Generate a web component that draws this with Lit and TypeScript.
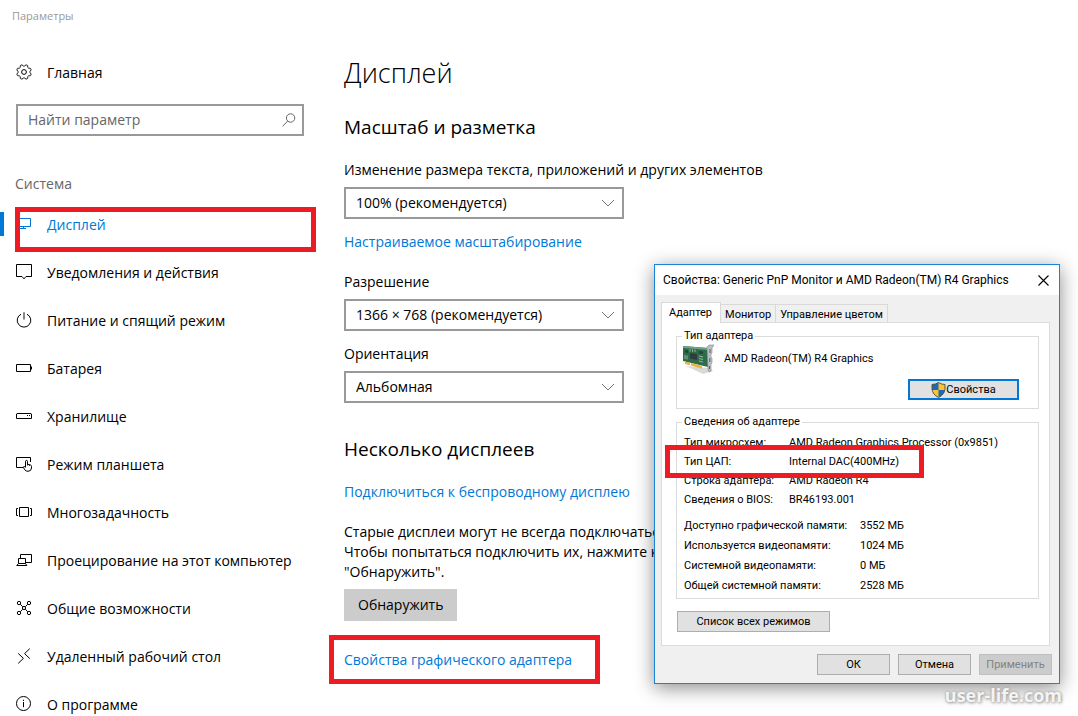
import { LitElement, html, css, svg } from "lit";
import { customElement, property, state } from "lit/decorators.js";
import { classMap } from "lit/directives/class-map.js";

const gearPath = (() => {
  // Eight rounded teeth around a circle, centred in a 16x16 box.
  const steps = 96;
  const pts: string[] = [];
  for (let i = 0; i < steps; i++) {
    const a = (i / steps) * Math.PI * 2;
    const wave = Math.max(-1, Math.min(1, Math.cos(a * 8) * 1.8));
    const r = 6.7 + wave * 0.75;
    pts.push(`${(8 + r * Math.cos(a + 0.39)).toFixed(2)} ${(8 + r * Math.sin(a + 0.39)).toFixed(2)}`);
  }
  return `M${pts.join("L")}Z`;
})();

const icons: Record<string, unknown> = {
  gear: svg`<path d=${gearPath} /><circle cx="8" cy="8" r="2.4" />`,
  display: svg`<path d="M-.5 2.5H14.5V10.5H-.5ZM7.5 10.5V12.5M4 12.5H10" />`,
  notify: svg`<path d="M.5 .5H15.5V12.5H10L8 14.8L6 12.5H.5Z" />`,
  power: svg`<path d="M5 2.2A6.8 6.8 0 1 0 11 2.2" /><path d="M8 .3V7.5" stroke-width="1.4" stroke="#555" />`,
  battery: svg`<path d="M.5 4.5H14.5V11.5H.5ZM15.5 6.5V9.5" />`,
  storage: svg`<path d="M1 5.5H15L15.5 6V10.5H.5V6ZM11 7.5H12M13 7.5H14" />`,
  tablet: svg`<path d="M7 11.5H.5V1.5H14.5V6" /><path d="M9.5 11.2V5.4a1 1 0 0 1 2 0V8.2L14.5 9Q15.5 9.3 15.5 10.4V12Q15.3 15.3 12 15.3Q9.8 15.3 8.8 13.8L7.2 11.2Q7.8 9.8 9.5 11.2M11.5 8.2V9.5M13.4 8.8V9.8" />`,
  multitask: svg`<path d="M3.5 3.5H12.5V12.5H3.5ZM2 4.5H.5V11.5H2M14 4.5H15.5V11.5H14" />`,
  project: svg`<path d="M4.5 6V2.5H15.5V10.5H10M2.5 6.5H9.5V11.5H2.5ZM2.5 11.5L.7 13.5H10.8L9.5 11.5" />`,
  share: svg`<path d="M4.3 4.3L6.8 6.8M11.7 4.3L9.2 6.8M4.3 11.7L6.8 9.2M11.7 11.7L9.2 9.2" /><circle cx="3" cy="3" r="1.7" /><circle cx="13" cy="3" r="1.7" /><circle cx="3" cy="13" r="1.7" /><circle cx="13" cy="13" r="1.7" /><circle cx="8" cy="8" r="1.6" />`,
  remote: svg`<path d="M2.2 5.4L7.4 10.4L2.2 15.4M13.8 .6L8.6 5.6L13.8 10.6" />`,
  about: svg`<circle cx="7.5" cy="7.5" r="7" /><path d="M7.5 6V11.2M7.5 3.8V5" />`,
};

const icon = (name: string) => html`<svg class="icon" viewBox="0 0 16 16" aria-hidden="true">${icons[name]}</svg>`;

const sections = [
  { icon: "display", label: "Дисплей" },
  { icon: "notify", label: "Уведомления и действия" },
  { icon: "power", label: "Питание и спящий режим" },
  { icon: "battery", label: "Батарея" },
  { icon: "storage", label: "Хранилище" },
  { icon: "tablet", label: "Режим планшета" },
  { icon: "multitask", label: "Многозадачность" },
  { icon: "project", label: "Проецирование на этот компьютер" },
  { icon: "share", label: "Общие возможности" },
  { icon: "remote", label: "Удаленный рабочий стол" },
  { icon: "about", label: "О программе" },
];

@customElement("settings-nav")
class SettingsNav extends LitElement {
  @property() current = "Дисплей";

  static styles = css`
    :host { display: block; color: #000; }
    a { color: inherit; text-decoration: none; }
    .caption { height: 32px; line-height: 32px; padding-left: 12px; font-size: 11px; color: #999; }
    .row { position: relative; display: flex; align-items: center; gap: 15px; height: 48px; padding-left: 16px; line-height: 20px; }
    .home { margin-top: 17px; }
    .icon { width: 16px; height: 16px; margin-bottom: 2px; fill: none; stroke: currentColor; stroke-width: 1; overflow: visible; flex: none; }
    .search { display: flex; align-items: center; height: 32px; margin: 7px 16px 0; border: 2px solid #999; box-sizing: border-box; padding: 0 6px 0 10px; }
    .search input { flex: 1; min-width: 0; border: 0; padding: 0; outline: 0; font: inherit; line-height: 20px; color: #000; background: none; }
    .search input::placeholder { color: #666; opacity: 1; }
    .search svg { width: 14px; height: 14px; fill: none; stroke: #666; }
    .group { margin: 38px 0 7px; padding-left: 15px; line-height: 20px; font-size: 14px; font-weight: 400; color: #666; }
    ul { list-style: none; margin: 0; padding: 0; }
    .current { color: #0078d7; }
    .current::before { content: ""; position: absolute; left: 0; top: 11px; width: 4px; height: 24px; background: #0078d7; }
    .mark { position: absolute; inset: 6px 4px -3px 15px; border: 5px solid #ed1c24; pointer-events: none; }
  `;

  render() {
    return html`
      <div class="caption">Параметры</div>
      <a class="row home" href="#home">${icon("gear")}<span>Главная</span></a>
      <label class="search">
        <input type="text" placeholder="Найти параметр" aria-label="Найти параметр" />
        <svg viewBox="0 0 14 14" aria-hidden="true"><circle cx="8.6" cy="5" r="4.2" /><path d="M5.6 8.2L.6 13.4" /></svg>
      </label>
      <h2 class="group">Система</h2>
      <ul>
        ${sections.map(
          (s) => html`<li>
            <a href="#${s.icon}" class=${classMap({ row: true, current: s.label === this.current })}>
              ${icon(s.icon)}<span>${s.label}</span>
              ${s.label === this.current ? html`<i class="mark"></i>` : ""}
            </a>
          </li>`
        )}
      </ul>
    `;
  }
}

@customElement("display-page")
class DisplayPage extends LitElement {
  static styles = css`
    :host { display: block; color: #000; line-height: 20px; padding-top: 55px; }
    h1 { margin: 0; font-size: 27px; font-weight: 300; line-height: 36px; }
    h2 { margin: 34px 0 21px; font-size: 19px; font-weight: 400; line-height: 24px; }
    h1 + h2 { margin-top: 24px; }
    a { color: #0078d7; text-decoration: none; }
    .line { display: flex; }
    .field { display: flex; flex-direction: column; gap: 7px; }
    .field + .field { margin-top: 13px; }
    .scaling { margin: 13px 0 20px; }
    .combo { position: relative; width: 280px; height: 32px; }
    select { appearance: none; width: 100%; height: 100%; box-sizing: border-box; border: 2px solid #999; border-radius: 0; background: #fff; padding: 0 30px 0 10px; font: inherit; color: #000; }
    .combo svg { position: absolute; right: 9px; top: 12px; width: 14px; height: 8px; fill: none; stroke: #777; pointer-events: none; }
    p { margin: 20px 0 7px; }
    button { height: 32px; padding: 0 14px; border: 0; background: #ccc; font: inherit; color: #000; }
    .adapter { margin-top: 29px; }
    .adapter a { position: relative; }
    .mark { position: absolute; inset: -15px -28px -14px -15px; border: 5px solid #ed1c24; pointer-events: none; }
  `;

  private combo(id: string, label: string, value: string) {
    return html`<div class="field">
      <label for=${id}>${label}</label>
      <div class="combo">
        <select id=${id}><option>${value}</option></select>
        <svg viewBox="0 0 14 8" aria-hidden="true"><path d="M1 1L7 7L13 1" /></svg>
      </div>
    </div>`;
  }

  render() {
    return html`
      <h1>Дисплей</h1>
      <h2>Масштаб и разметка</h2>
      ${this.combo("scale", "Изменение размера текста, приложений и других элементов", "100% (рекомендуется)")}
      <div class="line scaling"><a href="#scaling">Настраиваемое масштабирование</a></div>
      ${this.combo("resolution", "Разрешение", "1366 × 768 (рекомендуется)")}
      ${this.combo("orientation", "Ориентация", "Альбомная")}
      <h2>Несколько дисплеев</h2>
      <div class="line"><a href="#wireless">Подключиться к беспроводному дисплею</a></div>
      <p>Старые дисплеи могут не всегда подключаться<br />Чтобы попытаться подключить их, нажмите кнопку<br />"Обнаружить".</p>
      <button type="button">Обнаружить</button>
      <div class="line adapter"><a href="#adapter">Свойства графического адаптера<i class="mark"></i></a></div>
    `;
  }
}

@customElement("adapter-dialog")
class AdapterDialog extends LitElement {
  @state() private tab = "Адаптер";

  static styles = css`
    :host { display: block; box-sizing: border-box; border: 1px solid #1883d7; background: #f0f0f0; box-shadow: 0 4px 18px rgba(0, 0, 0, 0.45); color: #000; font: 11px/14px Roboto, "Noto Sans", sans-serif; }
    header { display: flex; align-items: center; justify-content: space-between; height: 30px; background: #fff; padding: 0 10px 0 8px; font-size: 12px; }
    header h2 { margin: 0; font-size: 12px; font-weight: 400; }
    .close { display: flex; padding: 0; border: 0; background: none; }
    .close svg { width: 11px; height: 11px; fill: none; stroke: #000; stroke-width: 1.1; }
    .body { padding: 7px 7px 8px 6px; }
    .tabs { display: flex; align-items: flex-end; height: 20px; }
    .tab { height: 18px; margin: 0; padding: 2px 4px 0 4px; border: 1px solid #d9d9d9; border-left-width: 0; border-bottom: 0; background: #f0f0f0; font: inherit; color: #000; }
    .tab.active { position: relative; height: 21px; margin-bottom: -1px; padding: 0 8px 1px 7px; border-left-width: 1px; background: #fff; }
    .panel { margin-right: 2px; border: 1px solid #dcdcdc; background: #fff; padding: 6px 10px 13px 14px; }
    fieldset { min-width: 0; margin: 0; border: 1px solid #dcdcdc; padding: 1px 19px 8px 5px; }
    fieldset + fieldset { margin-top: 6px; padding: 4px 5px 2px; }
    legend { padding: 0 2px; }
    .device { display: flex; align-items: center; gap: 10px; height: 30px; padding-left: 1px; }
    .device svg { width: 31px; height: 31px; }
    .right { display: flex; justify-content: flex-end; margin-top: 5px; }
    dl { display: grid; grid-template-columns: 105px 1fr; margin: 0; padding: 0 2px; line-height: 19px; }
    dl + dl { grid-template-columns: 176px 1fr; margin-top: 7px; line-height: 20px; }
    dd { margin: 0; }
    button.push { display: flex; align-items: center; justify-content: center; box-sizing: border-box; width: 73px; height: 21px; padding: 0; border: 1px solid #adadad; background: #e1e1e1; font: inherit; color: #000; }
    button.push.default { width: 111px; border: 2px solid #0078d7; }
    button.push.wide { width: 153px; margin: 12px 0 0 1px; }
    button.push:disabled { background: #ccc; border-color: #bfbfbf; color: #838383; }
    .push svg { width: 15px; height: 16px; }
    footer { display: flex; justify-content: flex-end; gap: 8px; margin-top: 8px; }
    .mark { position: absolute; left: 10px; top: 180px; width: 249px; height: 23px; border: 5px solid #ed1c24; pointer-events: none; }
  `;

  private card() {
    return html`<svg viewBox="0 0 31 31" aria-hidden="true">
      <path d="M3 22L20 30L30 27L27 24Z" fill="#000" opacity=".15" />
      <path d="M0 2L25 4V23L0 17Z" fill="#2d6b4a" />
      <path d="M0 2L25 4V6L0 4Z" fill="#6fa287" />
      <path d="M2 17.6V20L7 21.2V18.8ZM8 19V21.6L19 24.8V21.8Z" fill="#eab43c" />
      <path d="M7 9L14 10V16L7 14.5Z" fill="#333b3a" /><path d="M16 7L20 7.500V10L16 9.500ZM2 6L5 6.300V9L2 8.600Z" fill="#24443a" />
      <path d="M7 5V7.500M9.500 5.300V7.800M12 5.500V8M2 11V15M4 11.500V15.500M16 12L20 13M16 14.500L20 15.500M16 17L20 18" stroke="#a9cdb6" stroke-width=".8" />
      <path d="M24 3L26 1H31L29 4V9L28 10V13L29 14V19L28 20V27L26 28L25 26Z" fill="#b9bfc4" stroke="#84898e" stroke-width=".6" />
      <path d="M27 5V9M26.800 14V18M26.500 22V25" stroke="#555" stroke-width=".9" />
    </svg>`;
  }

  private shield() {
    return html`<svg viewBox="0 0 15 16" aria-hidden="true">
      <path d="M7.500 .5Q10.500 2.500 14 2.500V7Q13.500 12.500 7.500 15.500Q1.500 12.500 1 7V2.500Q4.500 2.500 7.500 .5Z" fill="#fcc331" />
      <path d="M7.500 .5V8H1.100L1 2.500Q4.500 2.500 7.500 .5ZM7.500 8H13.900Q13 12.700 7.500 15.500Z" fill="#1f67b8" />
      <path d="M7.500 .5Q10.500 2.500 14 2.500V7Q13.500 12.500 7.500 15.500Q1.500 12.500 1 7V2.500Q4.500 2.500 7.500 .5Z" fill="none" stroke="#4a4a42" stroke-width=".9" />
    </svg>`;
  }

  render() {
    const info = [
      ["Тип микросхем:", "AMD Radeon Graphics Processor (0x9851)"],
      ["Тип ЦАП:", "Internal DAC(400MHz)"],
      ["Строка адаптера:", "AMD Radeon R4"],
      ["Сведения о BIOS:", "BR46193.001"],
    ];
    const memory = [
      ["Доступно графической памяти:", "3552 МБ"],
      ["Используется видеопамяти:", "1024 МБ"],
      ["Системной видеопамяти:", "0 МБ"],
      ["Общей системной памяти:", "2528 МБ"],
    ];
    const rows = (list: string[][]) => html`<dl>${list.map(([k, v]) => html`<dt>${k}</dt><dd>${v}</dd>`)}</dl>`;
    return html`
      <header>
        <h2>Свойства: Generic PnP Monitor и AMD Radeon(TM) R4 Graphics</h2>
        <button class="close" type="button" aria-label="Закрыть"><svg viewBox="0 0 11 11"><path d="M.5 .5L10.500 10.500M10.500 .5L.5 10.500" /></svg></button>
      </header>
      <div class="body">
        <div class="tabs" role="tablist">
          ${["Адаптер", "Монитор", "Управление цветом"].map(
            (t) => html`<button type="button" role="tab" aria-selected=${t === this.tab ? "true" : "false"}
              class=${classMap({ tab: true, active: t === this.tab })} @click=${() => (this.tab = t)}>${t}</button>`
          )}
        </div>
        <div class="panel">
          <fieldset>
            <legend>Тип адаптера</legend>
            <div class="device">${this.card()}<span>AMD Radeon(TM) R4 Graphics</span></div>
            <div class="right"><button class="push default" type="button">${this.shield()}Свойства</button></div>
          </fieldset>
          <fieldset>
            <legend>Сведения об адаптере</legend>
            ${rows(info)}${rows(memory)}
          </fieldset>
          <button class="push wide" type="button">Список всех режимов</button>
        </div>
        <footer>
          <button class="push" type="button">ОК</button>
          <button class="push" type="button">Отмена</button>
          <button class="push" type="button" disabled>Применить</button>
        </footer>
      </div>
      <i class="mark"></i>
    `;
  }
}

@customElement("app-root")
class AppRoot extends LitElement {
  static styles = css`
    :host { display: block; position: relative; height: 100vh; overflow: hidden; background: #fff; font: 14px/20px "Open Sans", "Noto Sans", sans-serif; }
    .layout { display: grid; grid-template-columns: 320px 1fr; column-gap: 24px; }
    adapter-dialog { position: absolute; left: 654px; top: 264px; width: 406px; }
    .watermark { position: absolute; right: 16px; bottom: 9px; font-size: 18px; line-height: 24px; font-weight: 700; color: #f4f4f4; text-shadow: 0 0 3px #999, 1px 1px 3px #aaa; }
  `;

  render() {
    return html`
      <div class="layout">
        <settings-nav></settings-nav>
        <display-page></display-page>
      </div>
      <adapter-dialog></adapter-dialog>
      <div class="watermark">user-life.com</div>
    `;
  }
}
